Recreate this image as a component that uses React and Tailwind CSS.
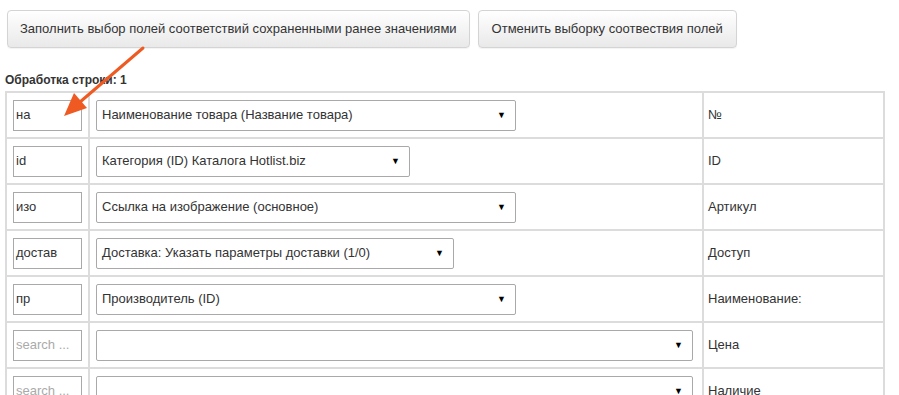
import React from "react";

const rows = [
  { input: "на", select: "Наименование товара (Название товара)", w: "w-[420px]", label: "№" },
  { input: "id", select: "Категория (ID) Каталога Hotlist.biz", w: "w-[314px]", label: "ID" },
  { input: "изо", select: "Ссылка на изображение (основное)", w: "w-[420px]", label: "Артикул" },
  { input: "достав", select: "Доставка: Указать параметры доставки (1/0)", w: "w-[358px]", label: "Доступ" },
  { input: "пр", select: "Производитель (ID)", w: "w-[420px]", label: "Наименование:" },
  { input: "", select: "", w: "w-[597px]", label: "Цена" },
  { input: "", select: "", w: "w-[597px]", label: "Наличие" },
];

function Sel({ text, w }) {
  return (
    <div className={`${w} h-[31px] border border-[#a9a9a9] rounded-[2px] bg-white flex items-center justify-between pl-[5px] pr-[9px]`}>
      <span className="text-[13px] text-[#333] whitespace-nowrap">{text}</span>
      <span className="text-[9px] text-black leading-none">▼</span>
    </div>
  );
}

export default function App() {
  return (
    <div className="relative w-[899px] h-[395px] overflow-hidden bg-white text-[#333]" style={{ fontFamily: '"Liberation Sans", Arial, sans-serif' }}>
      <div className="flex gap-[8px] pl-[7px] pt-[10px]">
        <button className="h-[38px] px-[12px] rounded-[4px] border border-[#d4d4d4] bg-gradient-to-b from-white to-[#e9e9e9] text-[13px] text-[#333] shadow-[0_1px_1px_rgba(0,0,0,0.05)]">
          Заполнить выбор полей соответствий сохраненными ранее значениями
        </button>
        <button className="h-[38px] px-[13px] rounded-[4px] border border-[#d4d4d4] bg-gradient-to-b from-white to-[#e9e9e9] text-[13px] text-[#333] shadow-[0_1px_1px_rgba(0,0,0,0.05)]">
          Отменить выборку соотвествия полей
        </button>
      </div>
      <div className="pl-[5px] mt-[25px] text-[12px] font-bold text-[#333] leading-[14px]">Обработка строки: 1</div>
      <div className="ml-[5px] mt-[4px] w-[880px] bg-[#dcdcdc] p-[2px] grid grid-cols-[81px_612px_179px] gap-[2px]">
        {rows.map((r, i) => (
          <React.Fragment key={i}>
            <div className="bg-white h-[44px] flex items-center pl-[6px]">
              <div className="w-[69px] h-[31px] border border-[#a9a9a9] flex items-center pl-[2px] text-[13px] text-[#333] whitespace-nowrap overflow-hidden">
                {r.input ? r.input : <span className="text-[#aaa]">search ...</span>}
              </div>
            </div>
            <div className="bg-white h-[44px] flex items-center pl-[6px]">
              <Sel text={r.select} w={r.w} />
            </div>
            <div className="bg-white h-[44px] flex items-center pl-[4px] text-[13px] text-[#333]">{r.label}</div>
          </React.Fragment>
        ))}
      </div>
      <svg className="absolute left-0 top-0 pointer-events-none" width="899" height="395">
        <line x1="143" y1="48" x2="80" y2="102" stroke="#ef5a22" strokeWidth="3" strokeLinecap="round" />
        <polygon points="64,116 74,93 87,108" fill="#ef5a22" />
      </svg>
    </div>
  );
}
